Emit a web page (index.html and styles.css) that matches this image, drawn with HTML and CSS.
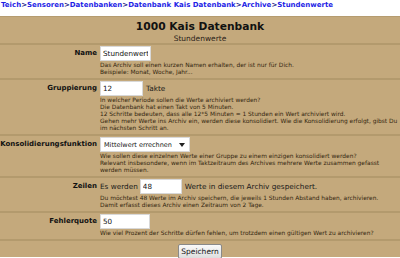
FILE: index.html
```html
<!DOCTYPE html>
<html>
<head>
<meta charset="utf-8">
<link rel="stylesheet" href="styles.css">
</head>
<body>
<div class="crumbs"><a>Teich</a><span class="sep">&gt;</span><a>Sensoren</a><span class="sep">&gt;</span><a>Datenbanken</a><span class="sep">&gt;</span><a>Datenbank Kais Datenbank</a><span class="sep">&gt;</span><a>Archive</a><span class="sep">&gt;</span><a>Stundenwerte</a></div>
<div class="panel">
  <div class="head">
    <div class="title">1000 Kais Datenbank</div>
    <div class="subtitle">Stundenwerte</div>
  </div>
  <div class="row">
    <div class="label">Name</div>
    <div class="value">
      <div class="line"><input class="inp w51" value="Stundenwerte"></div>
      <div class="desc">Das Archiv soll einen kurzen Namen erhalten, der ist nur für Dich.<br>Beispiele: Monat, Woche, Jahr...</div>
    </div>
  </div>
  <div class="row">
    <div class="label">Gruppierung</div>
    <div class="value">
      <div class="line"><input class="inp w43" value="12"><span class="txt">Takte</span></div>
      <div class="desc">In welcher Periode sollen die Werte archiviert werden?<br>Die Datenbank hat einen Takt von 5 Minuten.<br>12 Schritte bedeuten, dass alle 12*5 Minuten = 1 Stunden ein Wert archiviert wird.<br>Gehen mehr Werte ins Archiv ein, werden diese konsolidiert. Wie die Konsolidierung erfolgt, gibst Du<br>im nächsten Schritt an.</div>
    </div>
  </div>
  <div class="row">
    <div class="label">Konsolidierungsfunktion</div>
    <div class="value">
      <div class="line"><span class="select"><span class="seltext">Mittelwert errechnen</span><svg class="arrow" width="6" height="4" viewBox="0 0 6 4"><path d="M0 0H6L3 4Z" fill="#222"/></svg></span></div>
      <div class="desc">Wie sollen diese einzelnen Werte einer Gruppe zu einem einzigen konsolidiert werden?<br>Relevant insbesondere, wenn im Taktzeitraum des Archives mehrere Werte zusammen gefasst<br>werden müssen.</div>
    </div>
  </div>
  <div class="row">
    <div class="label">Zeilen</div>
    <div class="value">
      <div class="line"><span class="txt first">Es werden</span><input class="inp w42" value="48"><span class="txt">Werte in diesem Archiv gespeichert.</span></div>
      <div class="desc">Du möchtest 48 Werte im Archiv speichern, die jeweils 1 Stunden Abstand haben, archivieren.<br>Damit erfasst dieses Archiv einen Zeitraum von 2 Tage.</div>
    </div>
  </div>
  <div class="row">
    <div class="label">Fehlerquote</div>
    <div class="value">
      <div class="line"><input class="inp w50" value="50"></div>
      <div class="desc">Wie viel Prozent der Schritte dürfen fehlen, um trotzdem einen gültigen Wert zu archivieren?</div>
    </div>
  </div>
  <div class="foot"><button class="btn">Speichern</button></div>
</div>
</body>
</html>
```
FILE: styles.css
```css
html, body {
  margin: 0;
  padding: 0;
  background: #ffffff;
  width: 400px;
  height: 258px;
  overflow: hidden;
  font-family: "DejaVu Sans", Verdana, sans-serif;
}
.crumbs {
  height: 16px;
  padding-left: 1px;
  font-size: 7px;
  font-weight: bold;
  line-height: 11px;
  color: #1f1fe6;
  white-space: nowrap;
}
.crumbs a { color: #1f1fe6; }
.crumbs .sep { color: #1a1a88; }
.panel {
  background: #c4a97c;
  border-top: 1px solid #b59c70;
  width: 400px;
}
.head {
  height: 26px;
  text-align: center;
  display: flex;
  flex-direction: column;
  align-items: center;
}
.title {
  font-size: 10.7px;
  font-weight: bold;
  color: #111;
  line-height: 13px;
  padding-top: 3px;
}
.subtitle {
  font-size: 7.5px;
  color: #2a2218;
  line-height: 9px;
  margin-top: 1px;
}
.row {
  display: flex;
  border-top: 2px solid #b39a6d;
  padding-top: 1px;
  padding-bottom: 2px;
}
.label {
  width: 97px;
  flex: none;
  padding-right: 3px;
  text-align: right;
  font-size: 7px;
  font-weight: bold;
  line-height: 15px;
  color: #111;
  white-space: nowrap;
}
.value {
  flex: 1;
  min-width: 0;
}
.line {
  display: flex;
  align-items: center;
  height: 15px;
}
.inp {
  box-sizing: border-box;
  height: 15px;
  margin: 0;
  border: 1px solid #d8d8d8;
  background: #ffffff;
  padding: 0 2px;
  font-family: "DejaVu Sans", Verdana, sans-serif;
  font-size: 7.2px;
  color: #111;
  outline: none;
}
.w51 { width: 51px; }
.w43 { width: 43px; }
.w42 { width: 42px; }
.w50 { width: 50px; }
.txt {
  font-size: 7.3px;
  color: #1a1a1a;
  margin-left: 3px;
  margin-right: 2px;
  white-space: nowrap;
}
.txt.first { margin-left: 0; }
.select {
  box-sizing: border-box;
  width: 90px;
  height: 15px;
  background: #fff;
  border: 1px solid #d8d8d8;
  display: flex;
  align-items: center;
  justify-content: space-between;
  padding: 0 4px 0 3px;
}
.seltext {
  font-size: 6.5px;
  color: #111;
  white-space: nowrap;
}
.desc {
  margin-top: 1px;
  font-size: 5.9px;
  line-height: 7px;
  color: #33260f;
  white-space: nowrap;
}
.foot {
  border-top: 2px solid #b39a6d;
  display: flex;
  justify-content: center;
  padding-top: 3px;
  height: 13px;
}
.btn {
  box-sizing: border-box;
  width: 44px;
  height: 15px;
  padding: 0;
  font-family: "DejaVu Sans", Verdana, sans-serif;
  font-size: 7.5px;
  color: #111;
  border: 1px solid #8a8a8a;
  border-radius: 2px;
  background: linear-gradient(#fafafa, #dedede);
}
```
